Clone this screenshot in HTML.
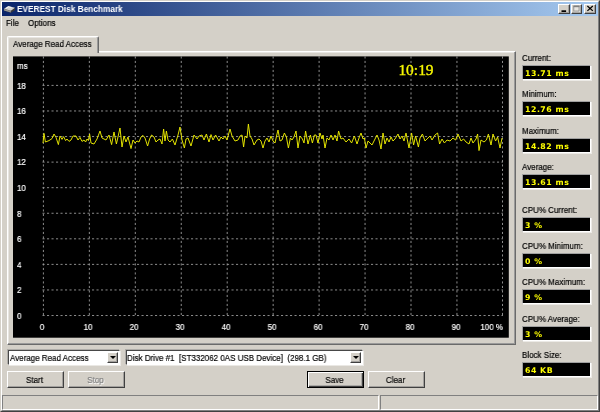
<!DOCTYPE html>
<html><head><meta charset="utf-8"><title>EVEREST Disk Benchmark</title>
<style>
html,body{margin:0;padding:0}
body{width:600px;height:412px;overflow:hidden;background:#d4d0c8;position:relative;font:9.2px "Liberation Sans",sans-serif;color:#000}
div{position:absolute;box-sizing:border-box;white-space:pre}
.t{font-size:9.2px;line-height:10px;-webkit-text-stroke:.2px;transform:scaleX(0.87);transform-origin:0 0;will-change:transform}
.t.c{text-align:center;transform-origin:50% 0}
.t.r{text-align:right;transform-origin:100% 0}
.w{color:#fff}
.frame{left:0;top:0;width:600px;height:412px;border:1px solid;border-color:#d4d0c8 #404040 #404040 #d4d0c8}
.frame2{left:1px;top:1px;width:598px;height:410px;border:1px solid;border-color:#fff #808080 #808080 #fff}
.title{left:2px;top:2px;width:596px;height:14px;background:linear-gradient(90deg,#0a246a 0%,#a6caf0 100%);}
.title .txt{left:15.2px;top:2.4px;color:#fff;font:bold 8.8px "Liberation Sans",sans-serif;line-height:10px;transform:scaleX(.94);transform-origin:0 0;will-change:transform}
.tb{top:2px;width:11px;height:10px;background:#d4d0c8;border:1px solid;border-color:#fff #404040 #404040 #fff;box-shadow:inset -1px -1px 0 rgba(128,128,128,.6)}
.vbox{left:522px;width:69px;height:15px;background:#000;border:1px solid;border-color:#a0a0a0 #fff #fff #a0a0a0;box-shadow:1px 1px 0 rgba(255,255,255,.55)}
.v{left:2.4px;top:3.2px;color:#ffff00;font:bold 7.8px "DejaVu Sans","Liberation Sans",sans-serif;letter-spacing:.52px;line-height:10px;will-change:transform}
.btn{top:371px;width:57px;height:17px;background:#d4d0c8;border:1px solid;border-color:#fff #404040 #404040 #fff;box-shadow:inset -1px -1px 0 rgba(128,128,128,.6)}
.btn .t{left:-1px;top:2.6px;width:55px}
.combo{top:350px;height:15px;background:#fff;border:1px solid;border-color:#484848 #fff #fff #484848;box-shadow:-1px -1px 0 rgba(128,128,128,.45),1px 1px 0 rgba(255,255,255,.5)}
.combo .t{left:1.2px;top:1.6px}
.cbtn{top:1px;right:1px;width:11px;height:11px;background:#d4d0c8;border:1px solid;border-color:#fff #404040 #404040 #fff;box-shadow:inset -1px -1px 0 rgba(128,128,128,.6)}
.cbtn:after{content:"";position:absolute;left:2px;top:3px;border:3px solid transparent;border-top:3px solid #000;border-bottom:none}
.sb{top:395px;height:15px;border:1px solid;border-color:#808080 #fff #fff #808080}
</style></head><body>
<div class="frame"></div><div class="frame2"></div>
<div class="title">
<svg style="position:absolute;left:0;top:0" width="20" height="14" viewBox="2 2 20 14"><path d="M4 9 L8.2 6.2 L15 8 L15 10.2 L10.8 12.8 L4 10.8 Z" fill="#3a3a3a"/><path d="M4 9 L10.8 10.9 L10.8 12.6 L4 10.6 Z" fill="#9a9a9a"/><path d="M4 8.8 L8.2 6 L15 7.8 L10.8 10.8 Z" fill="#d2d2d2"/><path d="M6 8.4 L8.6 6.8 L11.5 7.6" stroke="#fff" stroke-width=".8" fill="none"/></svg>
<div class="txt">EVEREST Disk Benchmark</div>
<div class="tb" style="left:556px;width:12px"><svg width="10" height="8" style="position:absolute;left:0;top:0"><rect x="2.5" y="5.3" width="4.6" height="1.7" fill="#000"/></svg></div>
<div class="tb" style="left:569px;width:11px"><svg width="9" height="8" style="position:absolute;left:0;top:0"><rect x="2.4" y="1.6" width="5.2" height="5" fill="#e8e6e0" stroke="#fff" stroke-width="1"/><rect x="1.9" y="1.1" width="5.2" height="5" fill="none" stroke="#808080" stroke-width="0.9"/><rect x="1.5" y="0.7" width="6" height="1.5" fill="#808080"/></svg></div>
<div class="tb" style="left:582px;width:12px"><svg width="10" height="8" style="position:absolute;left:0;top:0"><path d="M2.4 1 L7.8 5.9 M7.8 1 L2.4 5.9" stroke="#000" stroke-width="1.25"/></svg></div>
</div>
<div class="t" style="left:5.6px;top:17.7px">File</div><div class="t" style="left:27.5px;top:17.7px">Options</div>

<!-- tab control -->
<div style="left:7px;top:51px;width:509px;height:294px;border:1px solid;border-color:#fff #6a6a6a #6a6a6a #fff;box-shadow:inset -1px -1px 0 #9a9a9a,inset 1px 1px 0 rgba(255,255,255,.45)"></div>
<div style="left:7px;top:36px;width:92px;height:17px;background:#d4d0c8;border:1px solid;border-color:#fff #6a6a6a #d4d0c8 #fff;border-bottom:none;border-radius:2px 2px 0 0;box-shadow:inset -1px 0 0 #9a9a9a,inset 1px 1px 0 rgba(255,255,255,.45)"><div class="t" style="left:5.3px;top:2.2px">Average Read Access</div></div>

<svg style="position:absolute;left:0;top:0;will-change:transform" width="600" height="412" viewBox="0 0 600 412">
<rect x="13" y="56.4" width="495.8" height="281.3" fill="#000"/>
<g stroke="#9c9c9c" stroke-width="0.9" stroke-dasharray="2.1 2.4" fill="none"><line x1="43.40" y1="56.4" x2="43.40" y2="315.53"/><line x1="89.35" y1="56.4" x2="89.35" y2="315.53"/><line x1="135.30" y1="56.4" x2="135.30" y2="315.53"/><line x1="181.25" y1="56.4" x2="181.25" y2="315.53"/><line x1="227.20" y1="56.4" x2="227.20" y2="315.53"/><line x1="273.15" y1="56.4" x2="273.15" y2="315.53"/><line x1="319.10" y1="56.4" x2="319.10" y2="315.53"/><line x1="365.05" y1="56.4" x2="365.05" y2="315.53"/><line x1="411.00" y1="56.4" x2="411.00" y2="315.53"/><line x1="456.95" y1="56.4" x2="456.95" y2="315.53"/><line x1="502.50" y1="56.4" x2="502.50" y2="315.53"/><line x1="42.50" y1="85.40" x2="503.00" y2="85.40"/><line x1="42.50" y1="110.97" x2="503.00" y2="110.97"/><line x1="42.50" y1="136.54" x2="503.00" y2="136.54"/><line x1="42.50" y1="162.11" x2="503.00" y2="162.11"/><line x1="42.50" y1="187.68" x2="503.00" y2="187.68"/><line x1="42.50" y1="213.25" x2="503.00" y2="213.25"/><line x1="42.50" y1="238.82" x2="503.00" y2="238.82"/><line x1="42.50" y1="264.39" x2="503.00" y2="264.39"/><line x1="42.50" y1="289.96" x2="503.00" y2="289.96"/><line x1="42.50" y1="315.53" x2="503.00" y2="315.53"/></g>
<text x="398.4" y="75" fill="#f6f600" stroke="#f6f600" stroke-width=".35" font-family="Liberation Serif, serif" font-size="14.7" textLength="35.2" lengthAdjust="spacingAndGlyphs">10:19</text>
<polyline points="43.0,143.0 44.0,133.4 45.4,142.0 49.0,140.6 52.0,138.6 54.0,134.0 56.0,137.4 58.4,144.6 60.0,136.0 62.0,139.4 63.6,136.6 65.6,140.6 67.0,139.0 69.0,141.4 71.0,140.0 73.0,136.0 76.0,136.0 78.0,140.0 80.0,137.4 82.0,141.4 84.0,140.0 85.6,142.0 87.0,139.0 88.4,140.6 89.6,134.0 91.0,143.0 94.0,144.0 97.0,139.0 100.0,131.0 102.0,138.0 104.0,139.0 106.0,140.0 109.0,135.0 111.6,144.6 114.0,132.0 116.4,144.0 120.0,128.0 122.0,147.0 124.0,136.0 126.0,142.0 128.0,137.0 131.0,148.6 133.0,140.0 135.0,143.0 137.0,141.0 139.0,142.0 141.0,137.0 143.0,135.4 145.0,138.0 147.6,146.0 149.6,139.0 151.6,135.0 154.0,137.0 156.0,142.0 158.0,140.0 160.0,139.0 162.0,144.0 163.6,129.0 165.0,141.0 166.4,131.0 168.0,140.0 170.0,142.0 172.4,139.0 175.0,145.0 178.0,135.0 180.0,127.0 182.0,140.0 184.4,148.0 186.0,139.0 188.0,138.0 191.0,146.0 194.0,135.0 197.0,139.0 199.0,136.0 202.0,135.0 204.0,140.0 206.4,134.0 209.0,142.0 211.0,134.6 213.0,140.0 215.6,135.0 219.0,141.0 221.0,137.0 223.0,139.0 225.0,136.0 227.0,140.0 230.0,129.0 232.0,136.0 235.0,141.0 238.0,140.0 240.0,136.0 242.0,135.0 243.6,147.0 245.0,136.0 247.0,138.0 248.4,124.0 250.0,136.0 252.0,139.0 254.0,145.0 257.0,140.0 259.0,139.0 261.0,141.0 263.0,148.0 265.0,141.0 267.0,138.0 269.0,142.0 271.0,136.0 273.0,141.0 275.0,143.0 277.0,134.0 278.0,130.0 280.0,141.0 282.0,140.0 284.4,133.0 286.4,137.0 288.4,148.0 290.4,138.0 292.0,140.0 294.0,137.0 296.0,131.0 298.0,148.0 300.0,136.0 302.4,139.0 304.0,143.0 305.6,131.0 308.0,144.0 310.4,135.0 312.4,143.0 314.4,135.0 316.0,135.0 318.0,143.0 320.0,133.0 322.0,139.0 323.0,135.0 325.0,148.0 327.0,138.0 329.0,140.0 331.0,135.0 333.0,140.0 335.0,135.0 337.0,141.0 338.6,131.0 341.0,139.0 343.0,138.0 346.0,142.0 349.0,139.0 351.6,143.0 354.4,136.0 357.0,144.0 359.0,138.0 361.0,133.0 363.0,139.0 364.4,138.0 366.0,148.0 368.0,141.0 370.0,143.0 372.0,145.0 374.0,141.0 377.0,135.0 379.0,140.0 381.0,149.0 383.0,133.0 385.0,144.0 387.0,138.0 389.0,142.0 391.0,137.0 393.0,141.0 395.0,139.0 398.0,134.0 400.0,139.0 402.0,136.0 404.0,141.0 406.0,133.0 409.0,148.0 411.6,133.0 413.6,145.0 415.6,136.0 418.4,147.0 420.0,138.0 422.4,134.0 425.0,141.0 428.0,138.0 430.0,136.0 432.0,140.0 435.0,135.0 437.6,133.0 439.6,144.0 442.0,139.0 444.4,143.0 447.0,140.0 450.0,141.0 453.0,138.0 455.6,140.0 458.0,134.0 461.0,141.0 463.6,139.0 466.0,142.0 469.0,144.0 471.0,138.0 473.0,143.0 476.0,139.0 477.6,134.0 479.0,150.6 481.0,140.0 484.0,142.0 486.4,140.0 488.4,134.0 491.0,145.0 493.0,134.0 495.6,141.0 497.6,137.0 500.0,148.0 502.0,138.0" fill="none" stroke="#ecec00" stroke-width="0.95" stroke-linejoin="round"/>
</svg>
<div class="t w" style="left:17.2px;top:80.7px">18</div><div class="t w" style="left:17.2px;top:106.3px">16</div><div class="t w" style="left:17.2px;top:131.8px">14</div><div class="t w" style="left:17.2px;top:157.4px">12</div><div class="t w" style="left:17.2px;top:183.0px">10</div><div class="t w" style="left:17.2px;top:208.6px">8</div><div class="t w" style="left:17.2px;top:234.1px">6</div><div class="t w" style="left:17.2px;top:259.7px">4</div><div class="t w" style="left:17.2px;top:285.3px">2</div><div class="t w" style="left:17.2px;top:310.8px">0</div><div class="t w" style="left:17.2px;top:61.3px">ms</div>
<div class="t w c" style="left:22.4px;top:322px;width:40px">0</div><div class="t w c" style="left:68.3px;top:322px;width:40px">10</div><div class="t w c" style="left:114.3px;top:322px;width:40px">20</div><div class="t w c" style="left:160.3px;top:322px;width:40px">30</div><div class="t w c" style="left:206.2px;top:322px;width:40px">40</div><div class="t w c" style="left:252.1px;top:322px;width:40px">50</div><div class="t w c" style="left:298.1px;top:322px;width:40px">60</div><div class="t w c" style="left:344.1px;top:322px;width:40px">70</div><div class="t w c" style="left:390.0px;top:322px;width:40px">80</div><div class="t w c" style="left:435.9px;top:322px;width:40px">90</div><div class="t w r" style="left:443.0px;top:322px;width:60px">100 %</div>

<div class="t" style="left:522.2px;top:52.5px">Current:</div><div class="vbox" style="top:65px"><div class="v">13.71 ms</div></div>
<div class="t" style="left:522.2px;top:88.5px">Minimum:</div><div class="vbox" style="top:101px"><div class="v">12.76 ms</div></div>
<div class="t" style="left:522.2px;top:125.5px">Maximum:</div><div class="vbox" style="top:138px"><div class="v">14.82 ms</div></div>
<div class="t" style="left:522.2px;top:161.5px">Average:</div><div class="vbox" style="top:174px"><div class="v">13.61 ms</div></div>
<div class="t" style="left:522.2px;top:204.5px">CPU% Current:</div><div class="vbox" style="top:217px"><div class="v">3 %</div></div>
<div class="t" style="left:522.2px;top:240.5px">CPU% Minimum:</div><div class="vbox" style="top:253px"><div class="v">0 %</div></div>
<div class="t" style="left:522.2px;top:276.5px">CPU% Maximum:</div><div class="vbox" style="top:289px"><div class="v">9 %</div></div>
<div class="t" style="left:522.2px;top:313.5px">CPU% Average:</div><div class="vbox" style="top:326px"><div class="v">3 %</div></div>
<div class="t" style="left:522.2px;top:349.5px">Block Size:</div><div class="vbox" style="top:362px"><div class="v">64 KB</div></div>

<div class="combo" style="left:8px;width:112px"><div class="t">Average Read Access</div><div class="cbtn"></div></div>
<div class="combo" style="left:126px;width:237px"><div class="t" style="left:.4px">Disk Drive #1  [ST332062 0AS USB Device]  (298.1 GB)</div><div class="cbtn"></div></div>
<div class="btn" style="left:7px"><div class="t c">Start</div></div>
<div class="btn" style="left:68px;color:#808080;text-shadow:1px 1px 0 #fff"><div class="t c">Stop</div></div>
<div class="btn" style="left:307px;border-color:#000;box-shadow:inset 1px 1px 0 #fff,inset -1px -1px 0 #404040,inset -2px -2px 0 rgba(128,128,128,.5)"><div class="t c">Save</div></div>
<div class="btn" style="left:368px"><div class="t c">Clear</div></div>
<div class="sb" style="left:2px;width:377px"></div>
<div class="sb" style="left:380px;width:218px"></div>
</body></html>
